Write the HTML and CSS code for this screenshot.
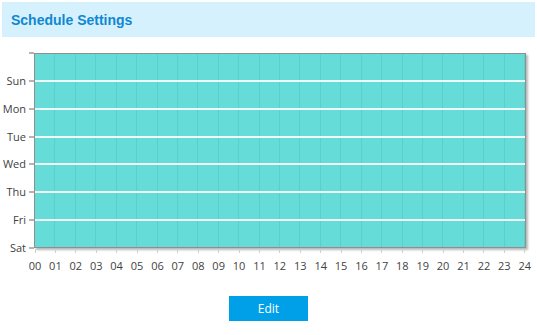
FILE: index.html
```html
<!DOCTYPE html>
<html lang="en">
<head>
    <meta charset="UTF-8">
    <title>Schedule Settings</title>
    <link rel="stylesheet" href="styles.css">
</head>
<body>
<div class="title">Schedule Settings</div>

<div class="schedule">
    <div class="y-axis">
        <div class="y-item"><span class="y-label"></span><i class="y-tick"></i></div>
        <div class="y-item"><span class="y-label">Sun</span><i class="y-tick"></i></div>
        <div class="y-item"><span class="y-label">Mon</span><i class="y-tick"></i></div>
        <div class="y-item"><span class="y-label">Tue</span><i class="y-tick"></i></div>
        <div class="y-item"><span class="y-label">Wed</span><i class="y-tick"></i></div>
        <div class="y-item"><span class="y-label">Thu</span><i class="y-tick"></i></div>
        <div class="y-item"><span class="y-label">Fri</span><i class="y-tick"></i></div>
        <div class="y-item"><span class="y-label">Sat</span><i class="y-tick"></i></div>
    </div>
    <div class="plot">
        <div class="grid">
            <div class="row"></div>
            <div class="row"></div>
            <div class="row"></div>
            <div class="row"></div>
            <div class="row"></div>
            <div class="row"></div>
            <div class="row"></div>
        </div>
        <div class="x-axis">
            <div class="x-item"><i class="x-tick"></i><span>00</span></div>
            <div class="x-item"><i class="x-tick"></i><span>01</span></div>
            <div class="x-item"><i class="x-tick"></i><span>02</span></div>
            <div class="x-item"><i class="x-tick"></i><span>03</span></div>
            <div class="x-item"><i class="x-tick"></i><span>04</span></div>
            <div class="x-item"><i class="x-tick"></i><span>05</span></div>
            <div class="x-item"><i class="x-tick"></i><span>06</span></div>
            <div class="x-item"><i class="x-tick"></i><span>07</span></div>
            <div class="x-item"><i class="x-tick"></i><span>08</span></div>
            <div class="x-item"><i class="x-tick"></i><span>09</span></div>
            <div class="x-item"><i class="x-tick"></i><span>10</span></div>
            <div class="x-item"><i class="x-tick"></i><span>11</span></div>
            <div class="x-item"><i class="x-tick"></i><span>12</span></div>
            <div class="x-item"><i class="x-tick"></i><span>13</span></div>
            <div class="x-item"><i class="x-tick"></i><span>14</span></div>
            <div class="x-item"><i class="x-tick"></i><span>15</span></div>
            <div class="x-item"><i class="x-tick"></i><span>16</span></div>
            <div class="x-item"><i class="x-tick"></i><span>17</span></div>
            <div class="x-item"><i class="x-tick"></i><span>18</span></div>
            <div class="x-item"><i class="x-tick"></i><span>19</span></div>
            <div class="x-item"><i class="x-tick"></i><span>20</span></div>
            <div class="x-item"><i class="x-tick"></i><span>21</span></div>
            <div class="x-item"><i class="x-tick"></i><span>22</span></div>
            <div class="x-item"><i class="x-tick"></i><span>23</span></div>
            <div class="x-item"><i class="x-tick"></i><span>24</span></div>
        </div>
    </div>
</div>

<div class="actions">
    <button class="btn-edit" type="button">Edit</button>
</div>
</body>
</html>
```

FILE: styles.css
```css
body {
    margin: 0;
    padding: 0;
    background-color: #fff;
    font-family: "Open Sans", "Liberation Sans", sans-serif;
    color: #3f3f3f;
}

.title {
    display: flex;
    align-items: center;
    height: 35px;
    margin: 2px 2px 0 2px;
    padding-left: 9px;
    background-color: #d5f1fd;
    font-family: "Liberation Sans", Arial, sans-serif;
    font-weight: bold;
    font-size: 14px;
    color: #1187d1;
}

.schedule {
    display: flex;
    margin-top: 16px;
}

/* y axis: 8 zero-height items spread over the grid's height */
.y-axis {
    display: flex;
    flex-direction: column;
    justify-content: space-between;
    width: 34px;
    height: 195px;
}

.y-item {
    display: flex;
    align-items: center;
    justify-content: flex-end;
    height: 0;
}

.y-label {
    font-size: 11px;
    line-height: 14px;
    margin-right: 3px;
}

.y-tick {
    display: block;
    width: 5px;
    height: 2px;
    background-color: #b4b4b4;
}

.plot {
    width: 492px;
}

.grid {
    display: flex;
    flex-direction: column;
    height: 193px;
    border: 1px solid #8f8f8f;
    box-shadow: 2px 2px 2px rgba(0, 0, 0, .28);
    background-color: #66dcd8;
    background-image: repeating-linear-gradient(to right, transparent 0, transparent 19.42px, #5ad0cc 19.42px, #5ad0cc 20.42px);
}

.row {
    flex: 1;
    border-bottom: 2px solid #effbfa;
}

.row:last-child {
    border-bottom: none;
}

.x-axis {
    display: flex;
    justify-content: space-between;
    margin: 1px 1px 0 1px;
}

.x-item {
    display: flex;
    flex-direction: column;
    align-items: center;
    width: 0;
}

.x-tick {
    display: block;
    width: 1px;
    height: 4px;
    background-color: #cfcfcf;
}

.x-item span {
    margin-top: 6px;
    font-size: 11px;
    line-height: 14px;
}

.actions {
    display: flex;
    justify-content: center;
    margin-top: 23px;
}

.btn-edit {
    width: 79px;
    height: 25px;
    border: none;
    padding: 0;
    background-color: #00a0e9;
    color: #fff;
    font-family: "Open Sans", "Liberation Sans", sans-serif;
    font-size: 12px;
}
```
